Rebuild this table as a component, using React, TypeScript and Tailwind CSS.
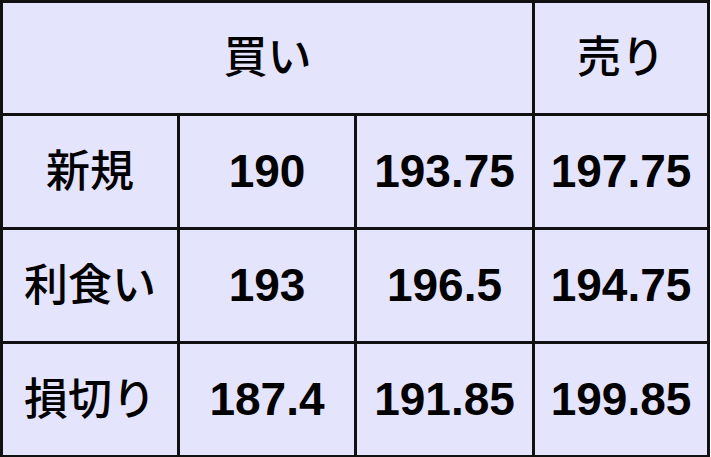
const rows = [
  ['新規', '190', '193.75', '197.75'],
  ['利食い', '193', '196.5', '194.75'],
  ['損切り', '187.4', '191.85', '199.85'],
]

const cell = 'border-[3px] border-[#111] text-center align-middle p-0'
const jp = 'font-medium text-[44px]'

export default function App() {
  return (
    <div className="w-[711px] h-[457px] bg-white">
      <table
        className="w-[710px] h-[456px] border-collapse table-fixed bg-[#e4e4fc] text-black text-[46px] font-bold"
        style={{ fontFamily: '"Liberation Sans", "Noto Sans CJK JP", sans-serif' }}
      >
        <colgroup>
          <col className="w-[177px]" />
          <col className="w-[177px]" />
          <col className="w-[178px]" />
          <col />
        </colgroup>
        <tbody>
          <tr className="h-[113px]">
            <td colSpan={3} className={`${cell} ${jp}`}>買い</td>
            <td className={`${cell} ${jp}`}>売り</td>
          </tr>
          {rows.map(r => (
            <tr key={r[0]} className="h-[114px]">
              {r.map((v, i) => (
                <td key={i} className={i === 0 ? `${cell} ${jp}` : cell}>{v}</td>
              ))}
            </tr>
          ))}
        </tbody>
      </table>
    </div>
  )
}
